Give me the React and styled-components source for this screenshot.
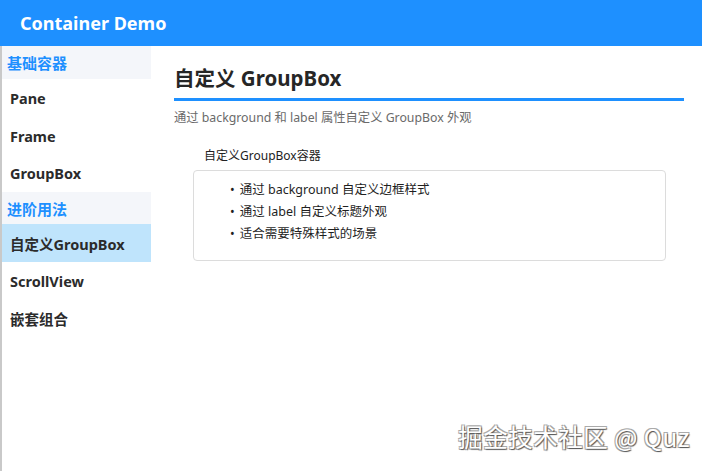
import styled, { createGlobalStyle } from "styled-components";

const GlobalStyle = createGlobalStyle`
  html, body {
    margin: 0;
    padding: 0;
    background: #ffffff;
  }
  body {
    font-family: "Noto Sans", "Noto Sans CJK SC", sans-serif;
  }
`;

const Window = styled.div`
  width: 702px;
  height: 471px;
  display: flex;
  flex-direction: column;
  position: relative;
  overflow: hidden;
`;

const Header = styled.header`
  height: 46px;
  flex: 0 0 46px;
  background: #1e90ff;
  color: #ffffff;
  display: flex;
  align-items: center;
  padding-left: 20px;
  font-size: 18px;
  font-weight: 700;
`;

const Body = styled.div`
  flex: 1;
  display: flex;
  min-height: 0;
`;

const Sidebar = styled.nav`
  width: 149px;
  flex: 0 0 149px;
  border-left: 2px solid #c9c9c9;
  display: flex;
  flex-direction: column;
`;

const Section = styled.div`
  height: ${({ h }) => h}px;
  background: #f4f6fa;
  color: #1e90ff;
  font-size: 15px;
  font-weight: 700;
  display: flex;
  align-items: center;
  padding-left: 5px;
  font-family: "Noto Sans CJK SC", sans-serif;
`;

const Item = styled.div`
  height: ${({ h }) => h || 37.7}px;
  background: ${({ active }) => (active ? "#bfe4fc" : "transparent")};
  color: #2b2b2b;
  font-size: 14.5px;
  font-weight: 700;
  display: flex;
  align-items: center;
  padding-left: 8px;
`;

const Main = styled.main`
  flex: 1;
  padding: 17px 18px 0 23px;
  display: flex;
  flex-direction: column;
`;

const Title = styled.h1`
  margin: 0;
  font-size: 20.5px;
  font-weight: 700;
  color: #262626;
  line-height: 31px;
  padding-bottom: 4px;
  border-bottom: 3px solid #1e90ff;
`;

const Subtitle = styled.p`
  margin: 8px 0 0;
  font-size: 12.3px;
  color: #6a6a6a;
  line-height: 18px;
`;

const Group = styled.section`
  margin: 21px 18px 0 19px;
`;

const GroupLabel = styled.div`
  font-size: 12px;
  color: #222;
  padding-left: 11px;
  line-height: 16px;
  margin-bottom: 6px;
`;

const GroupFrame = styled.div`
  border: 1px solid #dcdcdc;
  border-radius: 4px;
  height: 91px;
  padding: 8px 0 0 36px;
  box-sizing: border-box;
`;

const List = styled.ul`
  margin: 0;
  padding: 0;
  list-style: none;
`;

const Bullet = styled.li`
  font-size: 12.5px;
  color: #1f1f1f;
  line-height: 22px;
  &::before {
    content: "•";
    margin-right: 5px;
  }
`;

const Watermark = styled.div`
  position: absolute;
  right: 12px;
  bottom: 17px;
  font-size: 24.5px;
  color: #ffffff;
  font-family: "Noto Sans CJK SC", "Noto Sans", sans-serif;
  text-shadow: 1px 1px 1px #555, -1px -1px 0 #aaa, 1px -1px 0 #aaa, -1px 1px 0 #aaa;
  letter-spacing: 0.5px;
`;

export default function App() {
  return (
    <Window>
      <GlobalStyle />
      <Header>Container Demo</Header>
      <Body>
        <Sidebar>
          <Section h={33}>基础容器</Section>
          <Item>Pane</Item>
          <Item>Frame</Item>
          <Item>GroupBox</Item>
          <Section h={32}>进阶用法</Section>
          <Item active h={38}>自定义GroupBox</Item>
          <Item>ScrollView</Item>
          <Item>嵌套组合</Item>
        </Sidebar>
        <Main>
          <Title>自定义 GroupBox</Title>
          <Subtitle>通过 background 和 label 属性自定义 GroupBox 外观</Subtitle>
          <Group>
            <GroupLabel>自定义GroupBox容器</GroupLabel>
            <GroupFrame>
              <List>
                <Bullet>通过 background 自定义边框样式</Bullet>
                <Bullet>通过 label 自定义标题外观</Bullet>
                <Bullet>适合需要特殊样式的场景</Bullet>
              </List>
            </GroupFrame>
          </Group>
        </Main>
      </Body>
      <Watermark>掘金技术社区 @ Quz</Watermark>
    </Window>
  );
}
